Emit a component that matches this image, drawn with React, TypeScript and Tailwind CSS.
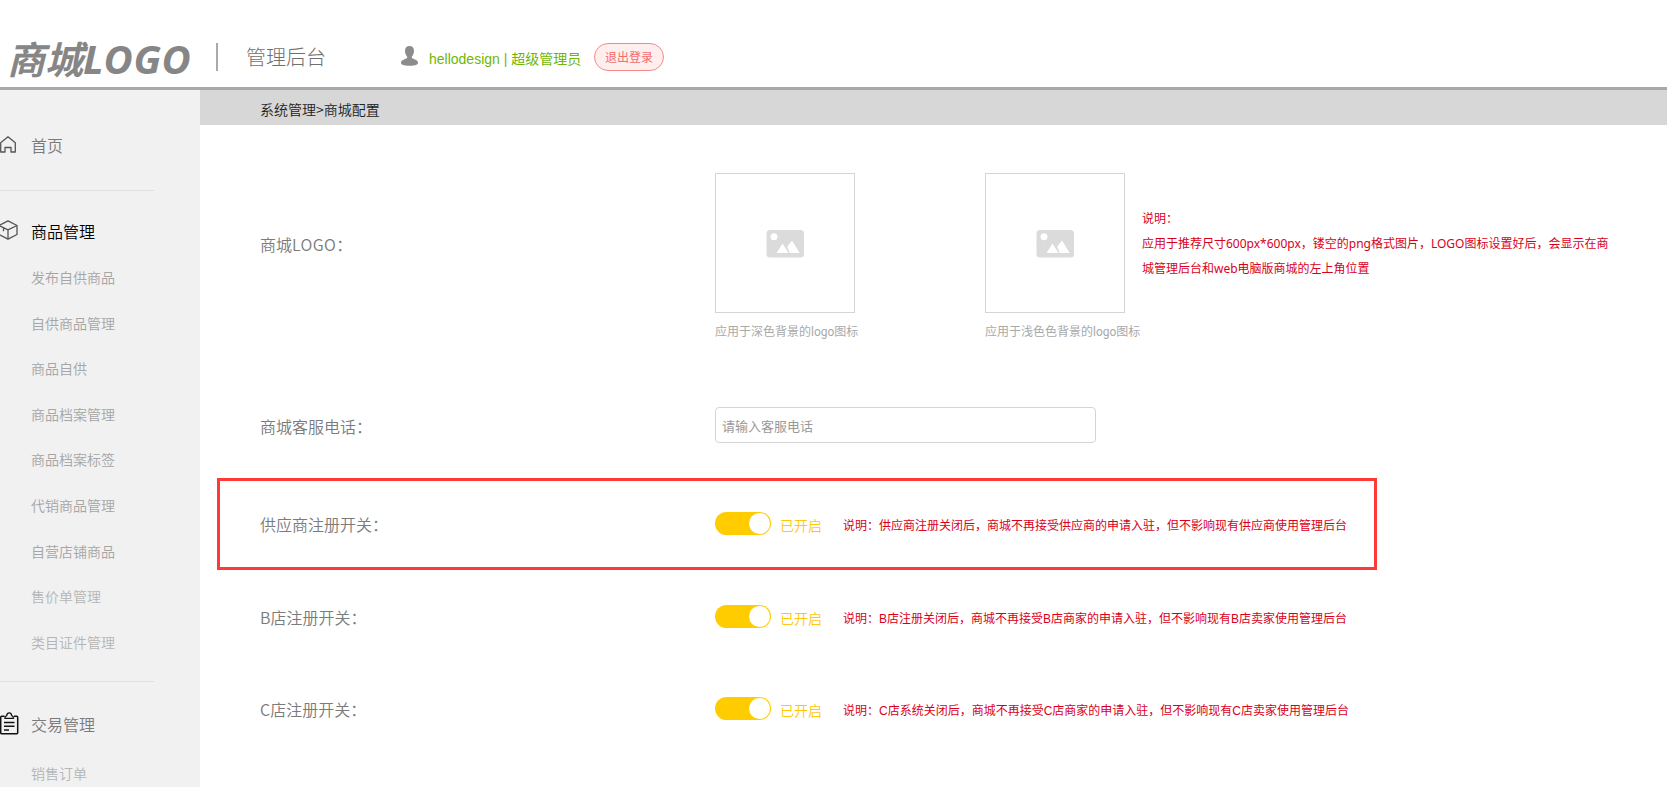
import React from 'react';

const productItems = [
  { label: '发布自供商品', tone: 'text-[#a5a5a5]' },
  { label: '自供商品管理', tone: 'text-[#a5a5a5]' },
  { label: '商品自供', tone: 'text-[#a5a5a5]' },
  { label: '商品档案管理', tone: 'text-[#a5a5a5]' },
  { label: '商品档案标签', tone: 'text-[#a5a5a5]' },
  { label: '代销商品管理', tone: 'text-[#a5a5a5]' },
  { label: '自营店铺商品', tone: 'text-[#a5a5a5]' },
  { label: '售价单管理', tone: 'text-[#b5b5b5]' },
  { label: '类目证件管理', tone: 'text-[#b5b5b5]' },
];

function UserIcon() {
  return (
    <svg width="17" height="20" viewBox="0 0 17 20" fill="#8c8c8c">
      <path d="M8.500 0C5.600 0 4 2 4 4.800c0 2.300.7 4.100 2 5.700.4.6.3 1.500-.4 1.800L2 13.900C.7 14.500 0 15.500 0 16.800c0 2 2.500 3 8.500 3s8.500-1 8.500-3c0-1.300-.7-2.300-2-2.900l-3.600-1.600c-.7-.3-.8-1.200-.4-1.800 1.300-1.600 2-3.400 2-5.700C13 2 11.400 0 8.500 0z" />
    </svg>
  );
}

function HomeIcon() {
  return (
    <svg width="17" height="17" viewBox="0 0 17 17" fill="none" stroke="#555" strokeWidth="1.300" strokeLinejoin="round">
      <path d="M.7 16V6.700L8 .8l7.300 5.900V16H11v-4.500H5V16H.7z" />
    </svg>
  );
}

function BoxIcon() {
  return (
    <svg width="18" height="20" viewBox="0 0 18 20" fill="none" stroke="#555" strokeWidth="1.300" strokeLinejoin="round">
      <path d="M8 .8l9 4.700v9L8 19.200l-9-4.700v-9L8 .8z" />
      <path d="M-1 5.500l9 4.400 9-4.400M8 9.900v9.300M3.500 7.700v3.600" />
    </svg>
  );
}

function ClipboardIcon() {
  return (
    <svg width="19" height="23" viewBox="0 0 19 23" fill="none" stroke="#111" strokeWidth="1.500" strokeLinejoin="round">
      <path d="M4.500 4.300H1.800C1.200 4.300.7 4.700.7 5.300v15.400c0 .6.400 1 1 1h15c.6 0 1-.4 1-1V5.300c0-.6-.5-1-1-1H14" />
      <path d="M4.800 6.300c0-1.700.9-2.400 1.900-2.700C7 1.700 7.800.9 9.200.9s2.200.8 2.500 2.700c1 .3 1.900 1 1.900 2.700H4.800z" strokeWidth="1.300" />
      <path d="M4 10.500h10.500M4 14.300h10.500M4 18h5" />
    </svg>
  );
}

function PictureIcon() {
  return (
    <svg width="38" height="28" viewBox="0 0 38 28">
      <rect x="0.500" y="0" width="37.500" height="27.500" rx="3.500" fill="#dbdbdb" />
      <circle cx="8" cy="6.700" r="3.500" fill="#fff" />
      <path d="M10.500 23l6-9.500 6 9.500zM21.300 16.500l4.700-6L33.700 23H23.700z" fill="#fff" />
    </svg>
  );
}

function SectionTitle({ icon, label, tone }: { icon: React.ReactNode; label: string; tone: string }) {
  return (
    <div className="flex h-6 items-center">
      <span className="w-[31px] shrink-0 pb-0.5">{icon}</span>
      <span className={`text-base leading-6 font-[350] ${tone}`}>{label}</span>
    </div>
  );
}

function LogoSlot({ caption }: { caption: string }) {
  return (
    <div className="w-[140px]">
      <div className="flex h-[140px] items-center justify-center border border-[#d5d5d5] pt-0.5">
        <PictureIcon />
      </div>
      <p className="mt-[9px] font-['Roboto','Noto_Sans_CJK_SC',sans-serif] text-xs leading-5 whitespace-nowrap text-[#a9a9a9]">
        {caption}
      </p>
    </div>
  );
}

function SwitchRow({ label, note }: { label: string; note: string }) {
  return (
    <div className="flex h-6 items-center">
      <span className="w-[455px] shrink-0 pt-0.5 text-base leading-6 font-[350] text-[#7b7b7b]">{label}</span>
      <span className="flex h-[23px] w-14 shrink-0 items-center justify-end rounded-full bg-[#ffcc00] pr-px">
        <span className="size-[21px] rounded-full bg-white" />
      </span>
      <span className="ml-[9px] w-[63px] shrink-0 pt-[3px] text-sm leading-5 font-[350] text-[#ffc60c]">已开启</span>
      <span className="pt-[5px] font-['Liberation_Sans','Noto_Sans_CJK_SC',sans-serif] text-xs leading-5 whitespace-nowrap text-[#d9001b]">
        {note}
      </span>
    </div>
  );
}

export default function App() {
  return (
    <div className="flex h-[787px] w-[1667px] flex-col overflow-hidden bg-white font-['Noto_Sans_CJK_SC',sans-serif]">
      <header className="flex h-[90px] shrink-0 border-b-[3px] border-[#a9a9a9]">
        <div className="flex w-[206px] shrink-0 items-baseline pt-[34px] pl-[7px] font-['Noto_Sans','Noto_Sans_CJK_SC',sans-serif] text-[38px] leading-[50px] font-bold whitespace-nowrap text-[#868686] italic">
          <span>商城</span>
          <span className="text-[40px] tracking-[0.6px]">LOGO</span>
        </div>
        <div className="mt-[43px] ml-[10px] h-7 w-0.5 shrink-0 bg-[#aaaaaa]" />
        <div className="mt-[42px] ml-7 w-[155px] shrink-0 text-xl leading-[30px] font-light text-[#6f6f6f]">管理后台</div>
        <div className="mt-[46px] w-7 shrink-0">
          <UserIcon />
        </div>
        <div className="mt-[49px] h-5 w-[165px] shrink-0 font-['Liberation_Sans','Noto_Sans_CJK_SC',sans-serif] text-sm leading-5 whitespace-nowrap text-[#70b603]">
          hellodesign | 超级管理员
        </div>
        <button className="mt-[43px] h-7 w-[70px] shrink-0 rounded-full border border-[#f78989] bg-[#ffeeee] text-xs text-[#f56c6c]">
          退出登录
        </button>
      </header>

      <div className="flex min-h-0 flex-1">
        <aside className="w-[200px] shrink-0 overflow-hidden bg-[#f1f1f1] pt-[43px]">
          <SectionTitle icon={<HomeIcon />} label="首页" tone="text-[#7b7b7b]" />
          <div className="mt-[33px] h-px w-[154px] bg-[#e0e0e0]" />
          <div className="mt-7">
            <SectionTitle icon={<BoxIcon />} label="商品管理" tone="text-black" />
          </div>
          <ul className="mt-3">
            {productItems.map((item) => (
              <li key={item.label} className={`h-[45.6px] pl-[31px] text-sm leading-[45.6px] font-[350] ${item.tone}`}>
                {item.label}
              </li>
            ))}
          </ul>
          <div className="mt-4 h-px w-[154px] bg-[#e0e0e0]" />
          <div className="mt-[30px]">
            <SectionTitle icon={<ClipboardIcon />} label="交易管理" tone="text-[#7b7b7b]" />
          </div>
          <div className="mt-[27px] pl-[31px] text-sm leading-5 font-[350] text-[#b5b5b5]">销售订单</div>
        </aside>

        <main className="min-w-0 flex-1">
          <nav className="h-[35px] bg-[#d7d7d7] pl-[60px] text-sm leading-[38px] font-[350] text-[#222222]">系统管理&gt;商城配置</nav>

          <section className="flex h-[282px] pt-12 pl-[60px]">
            <span className="mt-[59px] w-[455px] shrink-0 text-base leading-6 font-[350] text-[#7b7b7b]">
              商城<span className="tracking-[0.4px]">LOGO</span>：
            </span>
            <div className="flex gap-[130px]">
              <LogoSlot caption="应用于深色背景的logo图标" />
              <LogoSlot caption="应用于浅色色背景的logo图标" />
            </div>
            <p className="mt-[33px] ml-[17px] w-[475px] font-['Noto_Sans','Noto_Sans_CJK_SC',sans-serif] text-xs leading-[25px] text-[#d9001b]">
              说明：
              <br />
              应用于推荐尺寸600px*600px，镂空的png格式图片，LOGO图标设置好后，会显示在商
              <br />
              城管理后台和web电脑版商城的左上角位置
            </p>
          </section>

          <section className="flex h-9 items-center pl-[60px]">
            <span className="w-[455px] shrink-0 pt-0.5 text-base leading-6 font-[350] text-[#7b7b7b]">商城客服电话：</span>
            <input
              className="h-9 w-[381px] rounded-[4px] border border-[#d5d5d5] px-1.5 text-[13px] placeholder:text-[#999999]"
              placeholder="请输入客服电话"
            />
          </section>

          <section className="mt-[35px] ml-[17px] h-[92px] w-[1160px] border-[3px] border-[#ff3838] pt-[30px] pl-10">
            <SwitchRow label="供应商注册开关：" note="说明：供应商注册关闭后，商城不再接受供应商的申请入驻，但不影响现有供应商使用管理后台" />
          </section>
          <section className="mt-[34px] pl-[60px]">
            <SwitchRow label="B店注册开关：" note="说明：B店注册关闭后，商城不再接受B店商家的申请入驻，但不影响现有B店卖家使用管理后台" />
          </section>
          <section className="mt-[68px] pl-[60px]">
            <SwitchRow label="C店注册开关：" note="说明：C店系统关闭后，商城不再接受C店商家的申请入驻，但不影响现有C店卖家使用管理后台" />
          </section>
        </main>
      </div>
    </div>
  );
}
